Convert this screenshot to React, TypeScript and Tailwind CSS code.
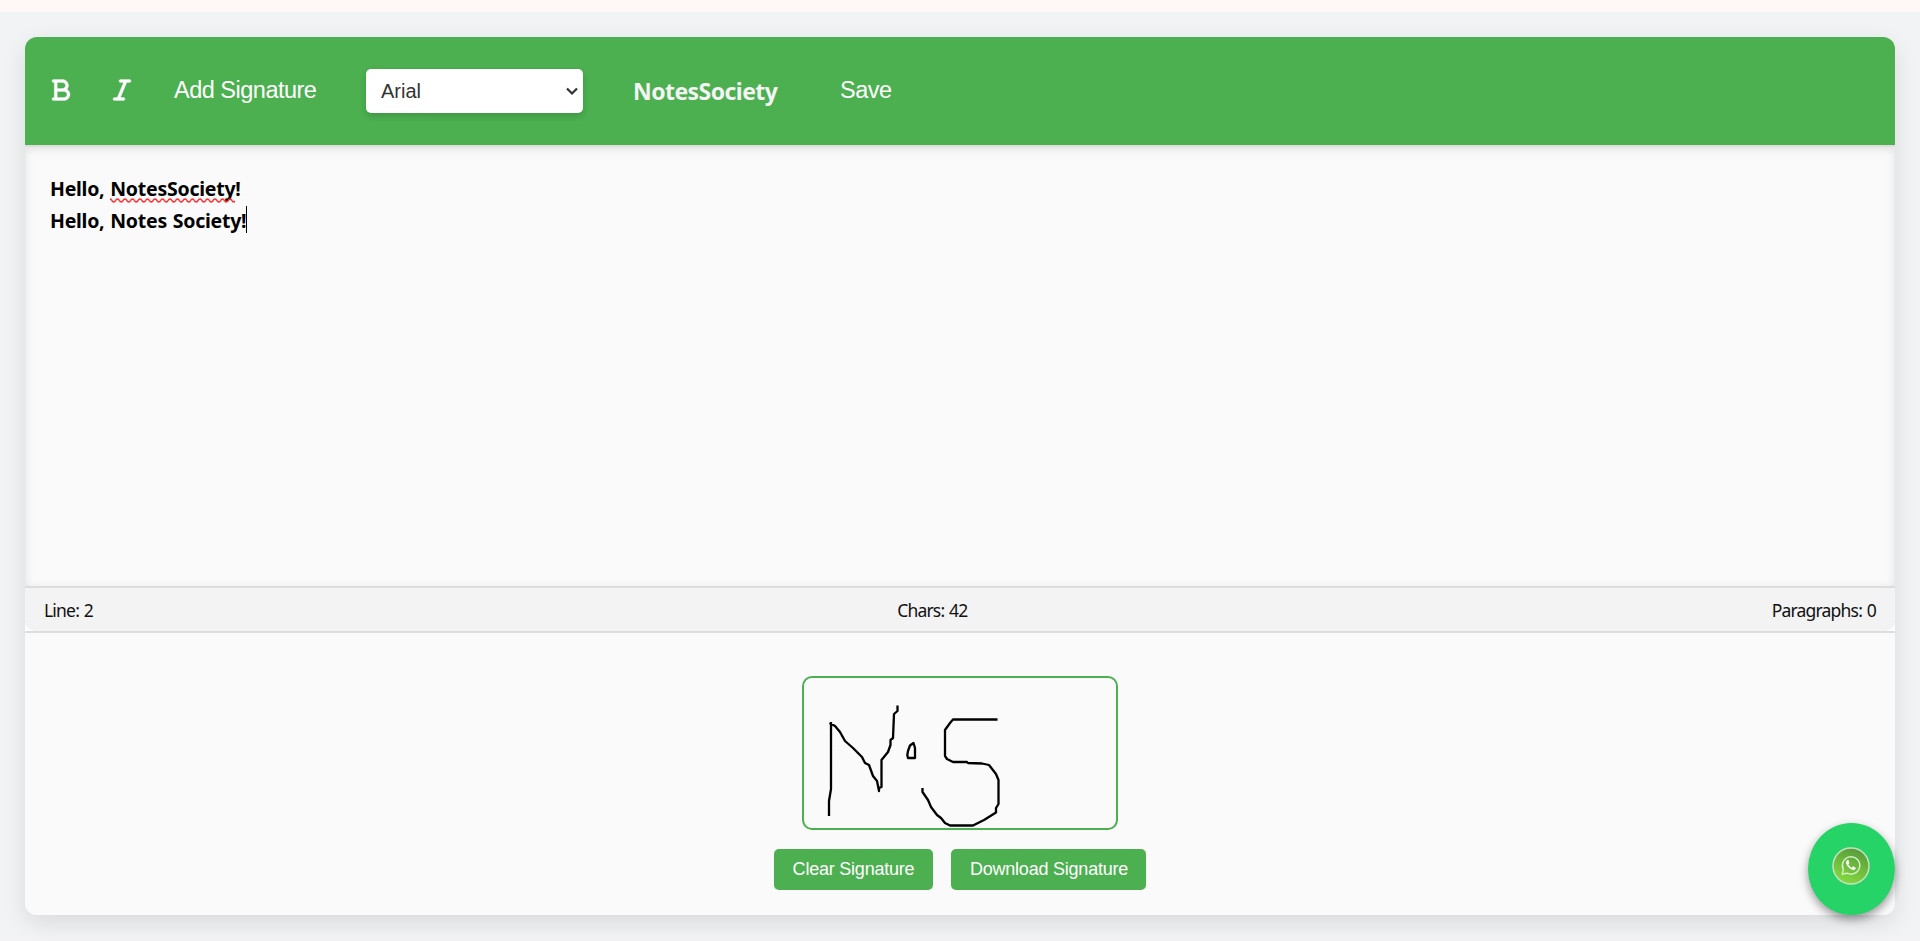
import { FaBold, FaItalic } from "react-icons/fa6";

const arial = "font-['Liberation_Sans',Arial,sans-serif]";

function Toolbar() {
  return (
    <div className={`flex h-[108px] items-center bg-[#4caf50] text-white ${arial}`}>
      <button className="ml-[27px] w-[18px]"><FaBold className="-mt-[2px] h-6 w-[18px] overflow-visible stroke-current stroke-[6]" /></button>
      <button className="ml-[43px] w-[18px]"><FaItalic className="-mt-[2px] h-6 w-[18px] overflow-visible stroke-current stroke-[6]" /></button>
      <button className="ml-[43px] w-[142px] pb-[2px] text-left text-[23.5px] leading-7 tracking-[-0.5px] whitespace-nowrap">
        Add Signature
      </button>
      <button className="ml-[50px] flex h-[44px] w-[217px] items-center justify-between rounded-[5px] bg-white pr-[5px] pl-[15px] text-[20px] text-[#333] shadow-[0_3px_6px_rgba(0,0,0,0.15)]">
        <span>Arial</span>
        <svg width="12" height="9" viewBox="0 0 12 9" fill="none" stroke="#333" strokeWidth="2.2">
          <path d="M1 1.500 6 6.500l5-5" />
        </svg>
      </button>
      <span className="ml-[50px] w-[145px] pt-px font-['Noto_Sans',sans-serif] text-[23px] font-bold tracking-[-0.55px] whitespace-nowrap text-[#f4f4f4]">
        NotesSociety
      </span>
      <button className="ml-[62px] pb-[2px] text-[23.5px] leading-7 tracking-[-0.5px]">Save</button>
    </div>
  );
}

function Editor() {
  return (
    <div className="h-[441px] border-t-2 border-[#ddd] bg-[#fafafa] px-[25px] pt-[26px] font-['Noto_Sans',sans-serif] text-[19.5px] leading-8 font-bold tracking-[-0.25px] [word-spacing:1px] text-black shadow-[inset_0_2px_10px_rgba(0,0,0,0.1)]">
      <div className="whitespace-nowrap">
        Hello,{" "}
        <span className="relative inline-block">
          NotesSociety
          <svg className="absolute bottom-[2px] left-0 h-[5px] w-full" aria-hidden="true">
            <defs>
              <pattern id="wave" width="7.500" height="5" patternUnits="userSpaceOnUse">
                <path d="M-1.875 2.500C-1 .5 1 .5 1.875 2.500S4.750 4.500 5.625 2.500 8.500 .5 9.375 2.500" fill="none" stroke="#f22" strokeWidth="1.400" />
              </pattern>
            </defs>
            <rect width="100%" height="5" fill="url(#wave)" />
          </svg>
        </span>
        !
      </div>
      <div className="flex whitespace-nowrap">
        <span>Hello, Notes Society!</span>
        <span className="mt-px h-[27px] w-px bg-black" />
      </div>
    </div>
  );
}

function StatusBar() {
  return (
    <div className="bg-white">
      <div className="flex h-[45px] items-center justify-between rounded-b-[10px] border-t-2 border-[#ddd] bg-[#f3f3f3] px-[19px] pt-[2px] font-['Noto_Sans',sans-serif] text-[17.5px] tracking-[-0.8px] [word-spacing:1px] text-[#111]">
        <span>Line: 2</span>
        <span>Chars: 42</span>
        <span>Paragraphs: 0</span>
      </div>
    </div>
  );
}

function Signature() {
  return (
    <div className={`flex h-[284px] flex-col items-center border-t-2 border-[#ddd] bg-[#fafafa] pt-[43px] text-white ${arial}`}>
      <div className="h-[154px] w-[316px] rounded-[10px] border-2 border-[#4caf50]">
        <svg className="-mt-[2px] -ml-[2px]" width="316" height="154" viewBox="42 26 316 154" fill="none" stroke="#000" strokeWidth="2.300" strokeLinejoin="round">
          <path d="M69 166V151L71 139V72M69.500 73 75 76 80 82 85 91 93 98 102 107 105 113 109 115 113 126 117 131 119 141V138L121.500 137V110L128 102 130.500 95V90L133 88 134 64 137.500 61V55.500" />
          <path d="M153.500 93 150 95.500 148 101 147.300 105 148 108H155V98Z" />
          <path d="M237.500 69.500H193L190 73 185 80V106L187 109 193 112H207L208 113 222 113.500 229 115 236 124 238.500 130V154L236 158V162.500L224 170 213 175.500H190L185 173 181 168 177 165 171 157 168 150 162.500 142V138" />
        </svg>
      </div>
      <div className="mt-[19px] flex gap-[18px] text-[18px] tracking-[-0.22px]">
        <button className="h-[41px] w-[159px] rounded-[5px] bg-[#4caf50] pb-px whitespace-nowrap">Clear Signature</button>
        <button className="h-[41px] w-[195px] rounded-[5px] bg-[#4caf50] pb-px pl-px whitespace-nowrap">Download Signature</button>
      </div>
    </div>
  );
}

function WhatsAppButton() {
  return (
    <button className="fixed right-[25px] bottom-[26px] flex h-[92px] w-[87px] items-center justify-center rounded-[50%] bg-[#25d366] pr-px pb-[6px] shadow-[0_4px_10px_rgba(0,0,0,0.4)]">
      <svg width="38" height="38" viewBox="0 0 38 38" fill="none">
        <defs>
          <linearGradient id="wa" x1="0.700" y1="0" x2="0.300" y2="1">
            <stop offset="0" stopColor="#559a3b" />
            <stop offset="1" stopColor="#86dc40" />
          </linearGradient>
        </defs>
        <circle cx="19" cy="19" r="18" fill="url(#wa)" stroke="#c9dfc1" strokeWidth="1.500" />
        <path d="M10.300 27.200 11.300 22.400A8.700 8.700 0 1 1 15.100 26.200Z" stroke="#d9efcc" strokeWidth="1.400" />
        <path d="M15.700 13c-1.500.4-2 2-1.500 3.500 1.100 3.300 4 6 7.300 6.400 1.200.1 2.200-.8 2.200-2.200l-2.600-1.400-1.500 1.400c-1.500-.7-2.600-1.900-3.200-3.200l1-1.500-1-2.900Z" fill="#fff" />
      </svg>
    </button>
  );
}

export default function App() {
  return (
    <div className="flex h-[941px] flex-col overflow-hidden bg-[#f3f3f3]">
      <div className="relative z-10 h-3 shrink-0 bg-[#fff8f6]" />
      <div className="h-[927px] shrink-0 bg-[#f1f3f5] px-[25px] pt-[25px]">
        <div className="rounded-[12px] shadow-[0_8px_25px_rgba(0,0,0,0.1)]">
          <div className="overflow-hidden rounded-[12px]">
            <Toolbar />
            <Editor />
            <StatusBar />
            <Signature />
          </div>
        </div>
      </div>
      <WhatsAppButton />
    </div>
  );
}
